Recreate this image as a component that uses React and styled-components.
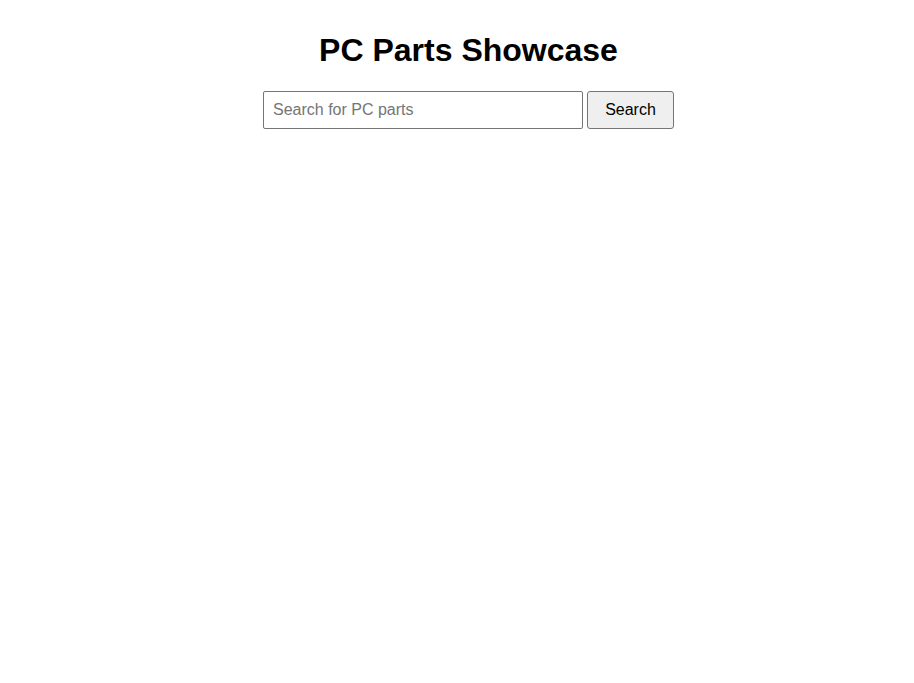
import styled, { createGlobalStyle } from "styled-components";

const GlobalStyle = createGlobalStyle`
  body {
    margin: 0;
    background: #ffffff;
    font-family: "Liberation Sans", Arial, sans-serif;
  }
`;

const Page = styled.main`
  display: flex;
  flex-direction: column;
  align-items: center;
  padding: 32px 0 0 23px;
`;

const Title = styled.h1`
  margin: 0;
  font-size: 32px;
  line-height: 37px;
  font-weight: bold;
  color: #000;
`;

const SearchBar = styled.form`
  display: flex;
  gap: 4px;
  margin-top: 22px;
`;

const SearchInput = styled.input`
  box-sizing: border-box;
  width: 320px;
  height: 38px;
  padding: 0 9px;
  font-family: "Liberation Sans", Arial, sans-serif;
  font-size: 16px;
  border: 1px solid #767676;
  border-radius: 2px;
  outline: none;

  &::placeholder {
    color: #757575;
  }
`;

const SearchButton = styled.button`
  box-sizing: border-box;
  width: 87px;
  height: 38px;
  font-family: "Liberation Sans", Arial, sans-serif;
  font-size: 16px;
  color: #000;
  background: #efefef;
  border: 1px solid #767676;
  border-radius: 3px;
  cursor: pointer;
`;

function App() {
  return (
    <>
      <GlobalStyle />
      <Page>
        <Title>PC Parts Showcase</Title>
        <SearchBar onSubmit={(e) => e.preventDefault()}>
          <SearchInput type="text" placeholder="Search for PC parts" />
          <SearchButton type="submit">Search</SearchButton>
        </SearchBar>
      </Page>
    </>
  );
}

export default App;
